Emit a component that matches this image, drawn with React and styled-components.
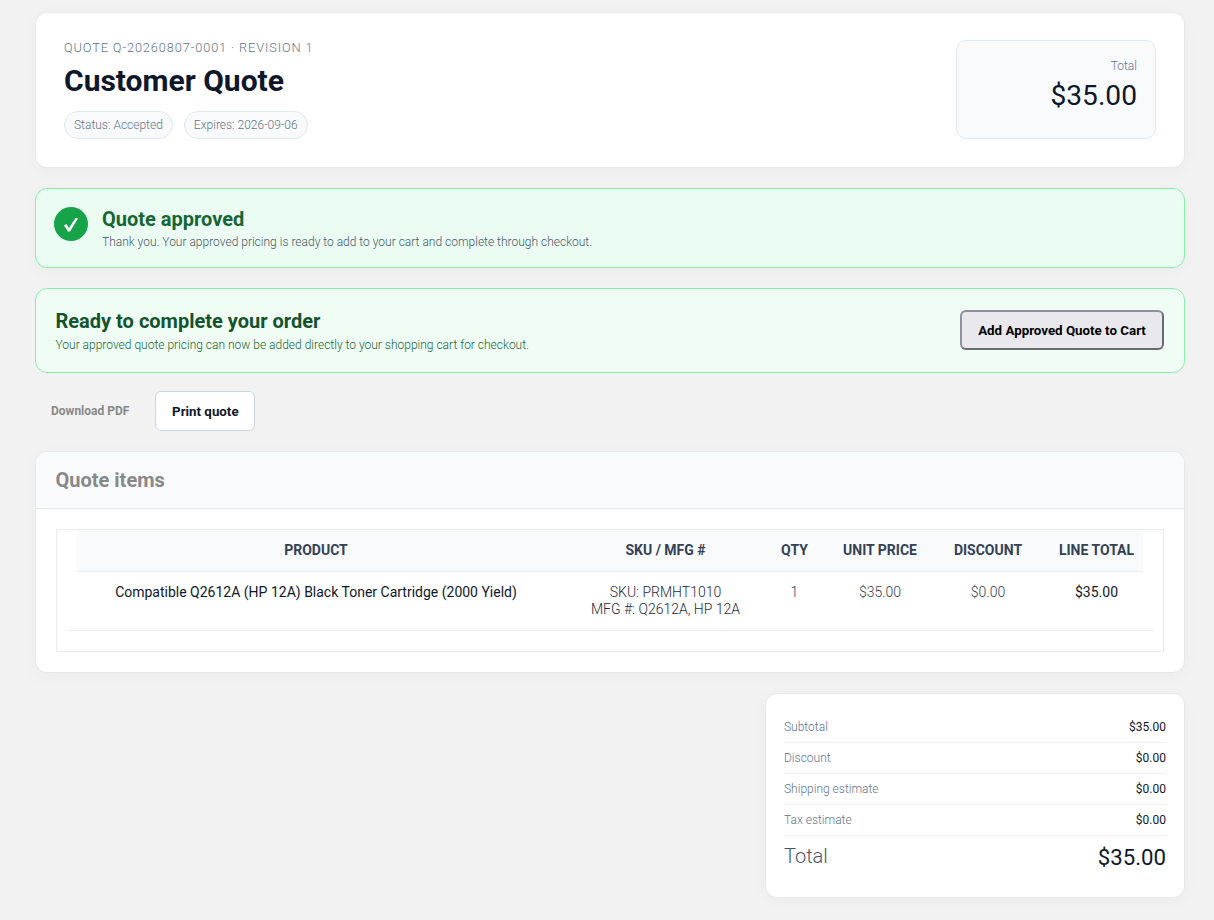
import React from "react";
import styled, { createGlobalStyle } from "styled-components";

const rows = [
	{ label: "Subtotal", value: "$35.00" },
	{ label: "Discount", value: "$0.00" },
	{ label: "Shipping estimate", value: "$0.00" },
	{ label: "Tax estimate", value: "$0.00" },
];

export default function App() {
	return (
		<Page>
			<GlobalStyle />
			<HeaderCard>
				<div>
					<Eyebrow>QUOTE Q-20260807-0001 · REVISION 1</Eyebrow>
					<Title>Customer Quote</Title>
					<Pills>
						<Pill>Status: Accepted</Pill>
						<Pill>Expires: 2026-09-06</Pill>
					</Pills>
				</div>
				<TotalBox>
					<TotalLabel>Total</TotalLabel>
					<TotalValue>$35.00</TotalValue>
				</TotalBox>
			</HeaderCard>

			<ApprovedBanner>
				<CheckBadge>
					<svg width="34" height="34" viewBox="0 0 34 34" aria-hidden="true">
						<polygon
							fill="#ffffff"
							points="10,18.5 12.4,17 15,21 21.6,11 24,11.6 16,24.6 14,24.6"
						/>
					</svg>
				</CheckBadge>
				<div>
					<ApprovedTitle>Quote approved</ApprovedTitle>
					<ApprovedText>
						Thank you. Your approved pricing is ready to add to your cart and
						complete through checkout.
					</ApprovedText>
				</div>
			</ApprovedBanner>

			<OrderBanner>
				<OrderCopy>
					<OrderTitle>Ready to complete your order</OrderTitle>
					<OrderText>
						Your approved quote pricing can now be added directly to your
						shopping cart for checkout.
					</OrderText>
				</OrderCopy>
				<CartButton>Add Approved Quote to Cart</CartButton>
			</OrderBanner>

			<Actions>
				<DownloadLink>Download PDF</DownloadLink>
				<PrintButton>Print quote</PrintButton>
			</Actions>

			<ItemsCard>
				<ItemsHead>Quote items</ItemsHead>
				<ItemsBody>
					<TableBox>
						<HeadRow>
							<HeadCell>PRODUCT</HeadCell>
							<HeadCell>SKU / MFG #</HeadCell>
							<HeadCell>QTY</HeadCell>
							<HeadCell>UNIT PRICE</HeadCell>
							<HeadCell>DISCOUNT</HeadCell>
							<HeadCell>LINE TOTAL</HeadCell>
						</HeadRow>
						<BodyRow>
							<BodyGrid>
								<ProductCell>
									Compatible Q2612A (HP 12A) Black Toner Cartridge (2000 Yield)
								</ProductCell>
								<SkuCell>
									SKU: PRMHT1010
									<br />
									MFG #: Q2612A, HP 12A
								</SkuCell>
								<Cell>1</Cell>
								<Cell>$35.00</Cell>
								<Cell>$0.00</Cell>
								<LineTotalCell>$35.00</LineTotalCell>
							</BodyGrid>
						</BodyRow>
					</TableBox>
				</ItemsBody>
			</ItemsCard>

			<SummaryWrap>
				<SummaryCard>
					{rows.map((row) => (
						<SummaryRow key={row.label}>
							<SummaryLabel>{row.label}</SummaryLabel>
							<SummaryValue>{row.value}</SummaryValue>
						</SummaryRow>
					))}
					<GrandRow>
						<GrandLabel>Total</GrandLabel>
						<GrandValue>$35.00</GrandValue>
					</GrandRow>
				</SummaryCard>
			</SummaryWrap>
		</Page>
	);
}

const GlobalStyle = createGlobalStyle`
	* {
		box-sizing: border-box;
	}

	body {
		margin: 0;
		background-color: #f2f2f2;
		font-family: Roboto, "Liberation Sans", sans-serif;
		font-weight: 300;
		color: #0f172a;
	}
`;

const Page = styled.main`
	width: 1150px;
	margin-left: 35px;
	padding: 12px 0 22px;
	display: flex;
	flex-direction: column;
`;

const Card = styled.section`
	background-color: #ffffff;
	border: 1px solid #e6e8ec;
	border-radius: 12px;
	box-shadow: 0 4px 18px rgba(15, 23, 42, 0.03);
`;

const HeaderCard = styled(Card)`
	height: 155.5px;
	padding: 27px 28px 0;
	display: flex;
	justify-content: space-between;
	align-items: flex-start;
`;

const Eyebrow = styled.div`
	font-size: 12.8px;
	line-height: 16px;
	letter-spacing: 0.87px;
	color: #64748b;
`;

const Title = styled.h1`
	margin: 6px 0 0;
	font-size: 30px;
	line-height: 38px;
	font-weight: 700;
	color: #0f172a;
`;

const Pills = styled.div`
	display: flex;
	gap: 11px;
	margin-top: 11px;
`;

const Pill = styled.span`
	height: 28px;
	padding: 0 9px;
	display: flex;
	align-items: center;
	font-size: 12px;
	color: #64748b;
	background-color: #f8fafc;
	border: 1px solid #e2e8f0;
	border-radius: 14px;
`;

const TotalBox = styled.div`
	width: 200px;
	height: 99px;
	padding: 17px 18px 0;
	text-align: right;
	background-color: #f8fafc;
	border: 1px solid #e2e8f0;
	border-radius: 10px;
`;

const TotalLabel = styled.div`
	font-size: 12px;
	line-height: 16px;
	color: #64748b;
`;

const TotalValue = styled.div`
	margin-top: 4px;
	font-size: 28.16px;
	line-height: 36px;
	font-weight: 400;
	color: #0f172a;
`;

const Banner = styled.section`
	border: 1px solid #86efac;
	border-radius: 12px;
	display: flex;
`;

const ApprovedBanner = styled(Banner)`
	margin-top: 20.5px;
	height: 80px;
	padding: 18px;
	gap: 14px;
	align-items: flex-start;
	background-color: #ebfdf3;
	box-shadow: 0 4px 18px rgba(15, 23, 42, 0.03);
`;

const CheckBadge = styled.div`
	width: 34px;
	height: 34px;
	flex: none;
	display: grid;
	place-items: center;
	border-radius: 50%;
	background-color: #16a34a;
`;

const ApprovedTitle = styled.div`
	font-size: 20px;
	line-height: 24px;
	font-weight: 700;
	color: #166534;
`;

const ApprovedText = styled.div`
	margin-top: 3px;
	font-size: 12px;
	line-height: 16px;
	color: #475569;
`;

const OrderBanner = styled(Banner)`
	margin-top: 20px;
	height: 85px;
	padding: 0 20px 0 19.5px;
	justify-content: space-between;
	align-items: flex-start;
	background-color: #f0fdf4;
`;

const OrderCopy = styled.div`
	margin-top: 20px;
`;

const OrderTitle = styled.div`
	font-size: 20px;
	line-height: 24px;
	font-weight: 700;
	color: #14532d;
`;

const OrderText = styled.div`
	margin-top: 4px;
	font-size: 12px;
	line-height: 16px;
	color: #166534;
`;

const CartButton = styled.button`
	width: 204px;
	height: 40px;
	margin-top: 21px;
	padding: 0;
	font-family: inherit;
	font-size: 13.33px;
	font-weight: 700;
	color: #000000;
	background-color: #e9e9ed;
	border: 2px solid;
	border-color: #8f8f9d #6a6a72 #6a6a72 #8f8f9d;
	border-radius: 6px;
`;

const Actions = styled.div`
	margin-top: 18px;
	display: flex;
	align-items: center;
	gap: 10px;
`;

const DownloadLink = styled.a`
	padding: 0 16px;
	font-size: 12px;
	font-weight: 700;
	color: #888888;
`;

const PrintButton = styled.button`
	width: 100px;
	height: 40px;
	padding: 0;
	font-family: inherit;
	font-size: 13.33px;
	font-weight: 700;
	color: #0f172a;
	background-color: #ffffff;
	border: 1px solid #cbd5e1;
	border-radius: 6px;
`;

const ItemsCard = styled(Card)`
	margin-top: 20px;
	height: 222px;
	overflow: hidden;
`;

const ItemsHead = styled.h2`
	margin: 0;
	height: 57px;
	padding: 0 19.5px;
	display: flex;
	align-items: center;
	font-size: 20px;
	font-weight: 700;
	color: #888888;
	background-color: #f8fafc;
	border-bottom: 1px solid #e2e8f0;
`;

const ItemsBody = styled.div`
	padding: 20px;
`;

const TableBox = styled.div`
	height: 123px;
	border: 1px solid #e9ebef;
`;

const columns = `
	display: grid;
	grid-template-columns: 478px 221px 37px 134px 82px 114px;
	justify-items: center;

	& > :last-child {
		padding-left: 21px;
	}
`;

const HeadRow = styled.div`
	${columns}
	margin: 0 20px;
	height: 42px;
	padding-bottom: 1px;
	align-items: center;
	background-color: #f8fafc;
	border-bottom: 1px solid #e9ebef;
`;

const HeadCell = styled.div`
	font-size: 14px;
	font-weight: 700;
	white-space: nowrap;
	color: #334155;
`;

const BodyRow = styled.div`
	margin: 0 10px;
	padding: 12px 10px 0;
	height: 59px;
	border-bottom: 1px solid #e9ebef;
`;

const BodyGrid = styled.div`
	${columns}
`;

const Cell = styled.div`
	font-size: 14px;
	line-height: 17px;
	text-align: center;
	white-space: nowrap;
	color: #334155;
`;

const SkuCell = styled(Cell)`
	color: #1e293b;
`;

const ProductCell = styled(Cell)`
	font-weight: 400;
	color: #0f172a;
`;

const LineTotalCell = styled(Cell)`
	font-weight: 400;
	color: #0f172a;
`;

const SummaryWrap = styled.div`
	margin-top: 20px;
	display: flex;
	justify-content: flex-end;
`;

const SummaryCard = styled(Card)`
	width: 420px;
	height: 205px;
	padding: 18px 18px 0;
`;

const SummaryRow = styled.div`
	height: 31px;
	display: flex;
	justify-content: space-between;
	align-items: center;
	border-bottom: 1px solid #eef1f5;
`;

const SummaryLabel = styled.span`
	font-size: 12px;
	color: #64748b;
`;

const SummaryValue = styled.span`
	font-size: 12px;
	font-weight: 400;
	color: #0f172a;
`;

const GrandRow = styled.div`
	height: 42px;
	display: flex;
	justify-content: space-between;
	align-items: center;
`;

const GrandLabel = styled.span`
	padding-bottom: 2px;
	font-size: 20px;
	color: #475569;
`;

const GrandValue = styled.span`
	font-size: 22.2px;
	font-weight: 400;
	color: #0f172a;
`;
